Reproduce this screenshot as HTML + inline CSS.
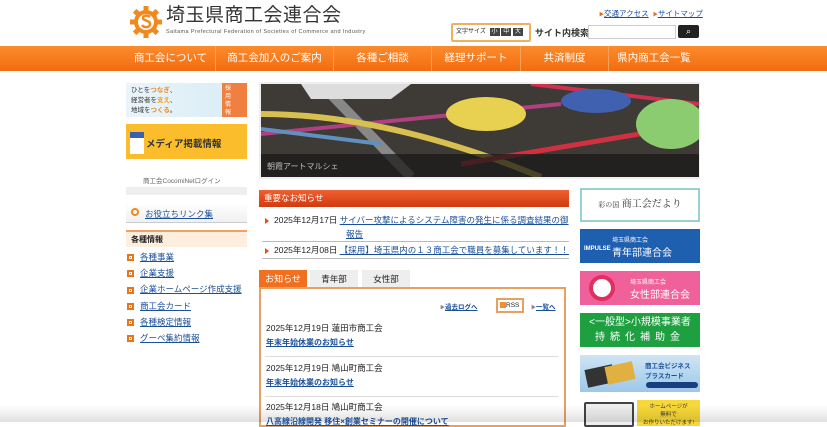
<!DOCTYPE html>
<html><head><meta charset="utf-8"><style>
*{margin:0;padding:0;box-sizing:border-box}
body{width:827px;height:422px;overflow:hidden;background:#fff;font-family:"Liberation Sans","Noto Sans CJK JP",sans-serif;color:#222;position:relative}
.a{position:absolute}
a,.lk{color:#1a4f9c;text-decoration:underline}
.nav{left:0;top:46px;width:827px;height:25px;background:linear-gradient(#fb8b2d,#f26d0f);}
.nav span{position:absolute;top:0;height:25px;line-height:25px;color:#fff;font-size:10.5px;text-align:center;border-right:1px solid #f7a25c}
.lt{font-size:8.5px}
.rb{left:580px;width:120px}
.tri{display:inline-block;width:0;height:0;border-left:4px solid #e05010;border-top:3px solid transparent;border-bottom:3px solid transparent;margin-right:5px;vertical-align:middle}
.sq{display:inline-block;width:7px;height:7px;background:#e8741a;border:2px solid #e8741a;box-shadow:inset 0 0 0 1px #fff;margin-right:6px;vertical-align:middle}
.item{left:266px;font-size:8.5px}
</style></head><body>
<svg class="a" style="left:130px;top:6px" width="32" height="32" viewBox="0 0 32 32">
<g fill="#f08a1e"><circle cx="16" cy="16" r="12"/>
<g id="t"><rect x="13.5" y="0" width="5" height="6"/></g>
<use href="#t" transform="rotate(45 16 16)"/><use href="#t" transform="rotate(90 16 16)"/><use href="#t" transform="rotate(135 16 16)"/><use href="#t" transform="rotate(180 16 16)"/><use href="#t" transform="rotate(225 16 16)"/><use href="#t" transform="rotate(270 16 16)"/><use href="#t" transform="rotate(315 16 16)"/></g>
<circle cx="16" cy="16" r="8" fill="#fff"/>
<path d="M20 11c-2-2-7-2-7 1s7 2 7 6-6 4-8 1" stroke="#f08a1e" stroke-width="2.5" fill="none"/>
</svg>
<div class="a" style="left:166px;top:6px;font-size:19px;line-height:20px;color:#333;letter-spacing:0.5px">埼玉県商工会連合会</div>
<div class="a" style="left:166px;top:29px;font-size:5.5px;line-height:6px;color:#555;letter-spacing:0.4px">Saitama Prefectural Federation of Societies of Commerce and Industry</div>
<div class="a" style="left:599px;top:8px;font-size:7.5px"><span style="color:#e07020;font-size:5px">▶</span><span class="lk">交通アクセス</span> &nbsp;<span style="color:#e07020;font-size:5px">▶</span><span class="lk">サイトマップ</span></div>
<div class="a" style="left:451px;top:23px;width:80px;height:19px;border:2px solid #f0b060;border-radius:2px;font-size:6px;line-height:15px;padding-left:3px">文字サイズ <span style="background:#444;color:#fff;padding:1px 2px;margin-left:2px">小</span> <span style="background:#444;color:#fff;padding:1px 2px">中</span> <span style="background:#444;color:#fff;padding:1px 2px">大</span></div>
<div class="a" style="left:535px;top:26px;font-size:9px;font-weight:bold;color:#333">サイト内検索</div>
<div class="a" style="left:588px;top:25px;width:88px;height:14px;border:1px solid #ccc"></div>
<div class="a" style="left:678px;top:25px;width:21px;height:13px;background:#222;border-radius:2px;color:#fff;font-size:9px;text-align:center;line-height:13px">&#x2315;</div>
<div class="a nav">
<span style="left:126px;width:90px">商工会について</span>
<span style="left:216px;width:118px">商工会加入のご案内</span>
<span style="left:334px;width:98px">各種ご相談</span>
<span style="left:432px;width:89px">経理サポート</span>
<span style="left:521px;width:88px">共済制度</span>
<span style="left:609px;width:90px;border:none">県内商工会一覧</span>
</div>
<div class="a" style="left:126px;top:83px;width:121px;height:34px;background:linear-gradient(90deg,#eaf4fa,#d8ecf6)"></div>
<div class="a" style="left:131px;top:86px;font-size:6.5px;line-height:10px;color:#333">ひとを<b style="color:#f08a1e">つなぎ</b>、<br>経営者を<b style="color:#f0a020">支え</b>、<br>地域を<b style="color:#f08a1e">つくる</b>。</div>
<div class="a" style="left:222px;top:83px;width:25px;height:34px;background:#f08040;color:#fff;font-size:6px;line-height:8px;padding:2px 3px">採<br>用<br>情<br>報</div>
<div class="a" style="left:126px;top:124px;width:121px;height:35px;background:#fbbd2c"></div>
<div class="a" style="left:130px;top:132px;width:14px;height:22px;background:#fff;border-top:6px solid #3a60b0"></div>
<div class="a" style="left:146px;top:136px;font-size:9.5px;font-weight:bold;color:#333">メディア掲載情報</div>
<div class="a" style="left:143px;top:175px;font-size:6.5px;color:#666">商工会CocomiNetログイン</div>
<div class="a" style="left:126px;top:187px;width:121px;height:8px;background:#eee"></div>
<div class="a" style="left:126px;top:203px;width:121px;height:20px;background:linear-gradient(#fff,#f0f0f0);border-bottom:1px solid #ccc"></div>
<div class="a" style="left:131px;top:208px;width:8px;height:8px;border-radius:50%;border:2px solid #f08a1e"></div>
<div class="a" style="left:145px;top:208px;font-size:8.5px" ><span class="lk">お役立ちリンク集</span></div>
<div class="a" style="left:126px;top:230px;width:121px;height:17px;background:#fdeedd;border-top:2px solid #f0a060;font-size:8px;font-weight:bold;line-height:15px;padding-left:5px">各種情報</div>
<div class="a lt" style="left:127px;top:249px;line-height:16.2px"><span class="sq"></span><span class="lk">各種事業</span><br><span class="sq"></span><span class="lk">企業支援</span><br><span class="sq"></span><span class="lk">企業ホームページ作成支援</span><br><span class="sq"></span><span class="lk">商工会カード</span><br><span class="sq"></span><span class="lk">各種検定情報</span><br><span class="sq"></span><span class="lk">グーペ集約情報</span></div>
<div class="a" style="left:259px;top:82px;width:441px;height:97px;background:#eee"></div>
<svg class="a" style="left:261px;top:84px" width="438" height="93" viewBox="0 0 438 93">
<rect width="438" height="93" fill="#3e3a35"/>
<path d="M60 0L150 93" stroke="#888" stroke-width="10"/>
<path d="M0 50L300 20" stroke="#b04080" stroke-width="4"/>
<path d="M0 30C100 30 200 60 280 93" stroke="#d8c050" stroke-width="6" fill="none"/>
<path d="M0 45L120 60" stroke="#6090c0" stroke-width="4"/>
<path d="M200 80L438 40" stroke="#d03040" stroke-width="5"/>
<path d="M270 0L438 20" stroke="#d03050" stroke-width="4"/>
<path d="M40 0h110l-20 15h-80z" fill="#ddd"/>
<ellipse cx="225" cy="30" rx="40" ry="17" fill="#e8d050"/>
<ellipse cx="335" cy="17" rx="35" ry="12" fill="#4060b0"/>
<ellipse cx="410" cy="40" rx="35" ry="25" fill="#8ccc70"/>
<rect y="70" width="438" height="23" fill="#1a1a1a" opacity=".75"/>
<text x="6" y="85" font-size="8" fill="#bbb" font-family="Liberation Sans,Noto Sans CJK JP,sans-serif">朝霞アートマルシェ</text>
</svg>
<div class="a" style="left:259px;top:190px;width:310px;height:17px;background:linear-gradient(#f06030,#d03a10);color:#fff;font-size:8.5px;line-height:17px;padding-left:5px">重要なお知らせ</div>
<div class="a" style="left:265px;top:213px;font-size:8.5px;line-height:15px;width:305px"><span class="tri"></span>2025年12月17日 <span class="lk">サイバー攻撃によるシステム障害の発生に係る調査結果の御</span></div>
<div class="a" style="left:346px;top:228px;font-size:8.5px"><span class="lk">報告</span></div>
<div class="a" style="left:262px;top:241px;width:307px;border-top:1px solid #bbb"></div>
<div class="a" style="left:265px;top:243px;font-size:8.5px;line-height:15px"><span class="tri"></span>2025年12月08日 <span class="lk">【採用】埼玉県内の１３商工会で職員を募集しています！！</span></div>
<div class="a" style="left:262px;top:258px;width:307px;border-top:1px solid #bbb"></div>
<div class="a" style="left:259px;top:270px;width:48px;height:18px;background:#f07020;color:#fff;font-size:9px;line-height:18px;text-align:center">お知らせ</div>
<div class="a" style="left:310px;top:270px;width:48px;height:18px;background:#eee;font-size:8.5px;line-height:18px;text-align:center">青年部</div>
<div class="a" style="left:362px;top:270px;width:48px;height:18px;background:#eee;font-size:8.5px;line-height:18px;text-align:center">女性部</div>
<div class="a" style="left:259px;top:287px;width:307px;height:140px;border:2px solid #e8a060"></div>
<div class="a" style="left:440px;top:301px;font-size:6.5px"><span style="color:#888;font-size:5px">▶</span><b class="lk">過去ログへ</b></div>
<div class="a" style="left:496px;top:298px;width:28px;height:15px;border:2px solid #e8a060;font-size:6.5px;line-height:11px;padding-left:2px"><span style="display:inline-block;width:6px;height:6px;background:#f09030;vertical-align:middle"></span>RSS</div>
<div class="a" style="left:531px;top:301px;font-size:6.5px"><span style="color:#888;font-size:5px">▶</span><b class="lk">一覧へ</b></div>
<div class="a item" style="top:322px">2025年12月19日 蓮田市商工会</div>
<div class="a item" style="top:337px;font-size:8px"><b class="lk">年末年始休業のお知らせ</b></div>
<div class="a" style="left:265px;top:356px;width:293px;border-top:1px solid #ddd"></div>
<div class="a item" style="top:362px">2025年12月19日 鳩山町商工会</div>
<div class="a item" style="top:377px;font-size:8px"><b class="lk">年末年始休業のお知らせ</b></div>
<div class="a" style="left:265px;top:396px;width:293px;border-top:1px solid #ddd"></div>
<div class="a item" style="top:401px">2025年12月18日 鳩山町商工会</div>
<div class="a item" style="top:416px;font-size:8px"><b class="lk">八高線沿線開発 移住×創業セミナーの開催について</b></div>
<div class="a rb" style="top:188px;height:34px;border:2px solid #9cd0d0;font-family:'Liberation Serif','Noto Serif CJK SC',serif;font-size:10px;line-height:30px;text-align:center;color:#333"><span style="font-size:7px">彩の国</span> 商工会だより</div>
<div class="a rb" style="top:229px;height:34px;background:#1f5fb0;color:#fff"><div style="position:absolute;left:32px;top:6px;font-size:6px">埼玉県商工会</div><div style="position:absolute;left:32px;top:15px;font-size:10px">青年部連合会</div><div style="position:absolute;left:4px;top:17px;font-size:6px;font-weight:bold">IMPULSE</div></div>
<div class="a rb" style="top:271px;height:34px;background:#f0609a;color:#fff"><div style="position:absolute;left:9px;top:4px;width:26px;height:26px;border-radius:50%;background:#fff;border:4px solid #e03060"></div><div style="position:absolute;left:50px;top:6px;font-size:6px">埼玉県商工会</div><div style="position:absolute;left:50px;top:15px;font-size:10px">女性部連合会</div></div>
<div class="a rb" style="top:313px;height:34px;background:#1fa040;color:#fff;font-size:10px;line-height:15px;text-align:center;padding-top:2px">&lt;一般型&gt;小規模事業者<br><span style="letter-spacing:5px">持続化補助金</span></div>
<div class="a rb" style="top:355px;height:37px;background:linear-gradient(#cfe4f4,#9cc8ea);color:#1a4f9c"><div style="position:absolute;left:6px;top:12px;width:28px;height:18px;background:#333;transform:rotate(-12deg)"></div><div style="position:absolute;left:26px;top:9px;width:28px;height:18px;background:#e0b040;transform:rotate(-12deg)"></div><div style="position:absolute;left:65px;top:5px;font-size:6.5px;font-weight:bold">商工会ビジネス<br>プラスカード</div><div style="position:absolute;left:66px;top:27px;width:52px;height:6px;background:#1a3f80;border-radius:3px"></div></div>
<div class="a" style="left:584px;top:402px;width:50px;height:25px;border:2px solid #444;border-radius:2px;background:#eee"></div>
<div class="a" style="left:637px;top:400px;width:63px;height:26px;background:#f8d838;font-size:5.5px;text-align:center;color:#333;padding-top:2px">ホームページが<br>無料で<br>お作りいただけます!</div>
<div class="a" style="left:0;top:405px;width:827px;height:17px;background:linear-gradient(rgba(0,0,0,0),rgba(0,0,0,.12))"></div>
</body></html>
